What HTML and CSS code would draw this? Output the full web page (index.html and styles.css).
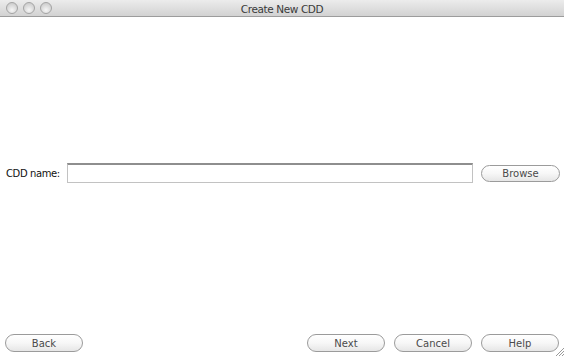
FILE: index.html
```html
<!DOCTYPE html>
<html lang="en">
<head>
    <meta charset="UTF-8">
    <title>Create New CDD</title>
    <link rel="stylesheet" href="styles.css">
</head>
<body>
    <div class="window">
        <div class="titlebar">
            <div class="lights">
                <span class="light"></span>
                <span class="light"></span>
                <span class="light"></span>
            </div>
            <div class="title">Create New CDD</div>
        </div>

        <div class="content">
            <div class="name-row">
                <label for="cddName">CDD name:</label>
                <input type="text" id="cddName">
                <button class="btn browse">Browse</button>
            </div>
        </div>

        <div class="footer">
            <button class="btn">Back</button>
            <div class="right-buttons">
                <button class="btn">Next</button>
                <button class="btn">Cancel</button>
                <button class="btn">Help</button>
            </div>
        </div>

        <svg class="grip" width="9" height="9" viewBox="0 0 9 9">
            <line x1="1" y1="9" x2="9" y2="1" stroke="#9a9a9a" stroke-width="1"/>
            <line x1="4" y1="9" x2="9" y2="4" stroke="#9a9a9a" stroke-width="1"/>
            <line x1="7" y1="9" x2="9" y2="7" stroke="#9a9a9a" stroke-width="1"/>
        </svg>
    </div>
</body>
</html>
```

FILE: styles.css
```css
body {
    margin: 0;
    font-family: 'DejaVu Sans', 'Liberation Sans', sans-serif;
    background-color: #fff;
}
.window {
    position: relative;
    width: 564px;
    height: 356px;
    display: flex;
    flex-direction: column;
    background-color: #fff;
}
.titlebar {
    position: relative;
    height: 16px;
    border-bottom: 1px solid #9c9c9c;
    background: linear-gradient(#ececec, #d2d2d2);
    display: flex;
    align-items: center;
    justify-content: center;
}
.lights {
    position: absolute;
    left: 6px;
    top: 2px;
    display: flex;
    gap: 5px;
}
.light {
    width: 10px;
    height: 10px;
    border-radius: 50%;
    border: 1px solid #a4a4a4;
    background: radial-gradient(circle at 50% 70%, #f6f6f6, #cfcfcf 75%);
}
.title {
    font-size: 10.5px;
    letter-spacing: -0.4px;
    color: #3a3a3a;
    padding-top: 1px;
}
.content {
    flex: 1;
    display: flex;
    align-items: center;
    padding: 0 4px 0 6px;
}
.name-row {
    flex: 1;
    display: flex;
    align-items: center;
    gap: 7px;
}
label {
    font-size: 10px;
    letter-spacing: -0.4px;
    color: #111;
}
input[type="text"] {
    flex: 1;
    height: 20px;
    box-sizing: border-box;
    margin: 0;
    border: 1px solid #c2c2c2;
    border-top: 2px solid #8e8e8e;
    background-color: #fff;
    padding: 0 3px;
    outline: none;
}
.btn {
    width: 78px;
    height: 18px;
    box-sizing: border-box;
    margin: 0;
    padding: 0;
    border: 1px solid #9b9b9b;
    border-radius: 9px;
    background: linear-gradient(#ffffff, #f7f7f7 50%, #e6e6e6);
    font-family: 'DejaVu Sans', 'Liberation Sans', sans-serif;
    font-size: 10px;
    color: #4a4a4a;
}
.browse {
    width: 79px;
    height: 17px;
    margin-left: 1px;
}
.footer {
    height: 27px;
    box-sizing: border-box;
    padding: 5px 5px 4px 5px;
    display: flex;
    justify-content: space-between;
}
.right-buttons {
    display: flex;
    gap: 9px;
}
.grip {
    position: absolute;
    right: 0;
    bottom: 0;
}
```
